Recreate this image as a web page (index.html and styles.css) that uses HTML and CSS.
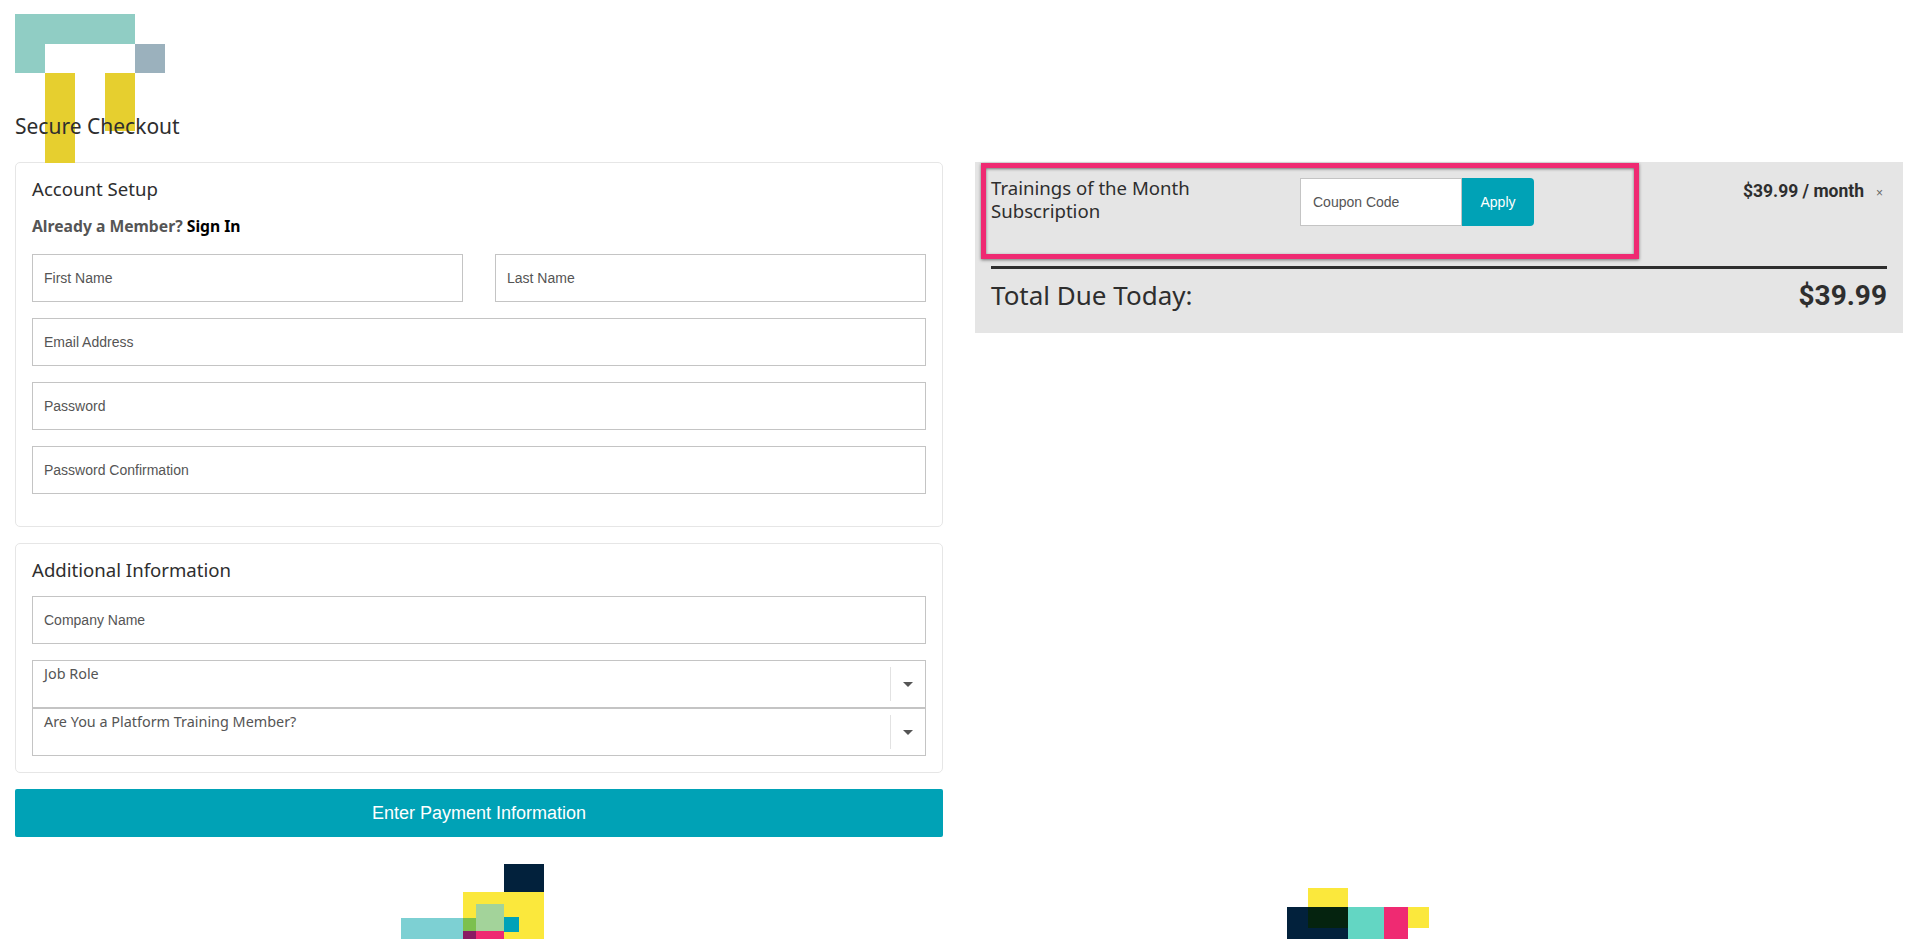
FILE: index.html
```html
<!DOCTYPE html>
<html lang="en">
<head>
    <meta charset="UTF-8">
    <meta name="viewport" content="width=device-width, initial-scale=1.0">
    <title>Secure Checkout</title>
    <link rel="stylesheet" href="styles.css">
</head>
<body>
    <header class="page-header">
        <svg class="logo" width="150" height="149" viewBox="0 0 150 149">
            <path fill="#90cdc4" d="M0 0H120V30H30V59H0Z"/>
            <rect x="120" y="30" width="30" height="29" fill="#9bb1bd"/>
            <rect x="30" y="59" width="30" height="90" fill="#e6cf2f"/>
            <rect x="90" y="59" width="30" height="58" fill="#e6cf2f"/>
        </svg>
        <h1>Secure Checkout</h1>
    </header>

    <main class="checkout">
        <div class="form-column">
            <section class="card account-card">
                <h2>Account Setup</h2>
                <p class="member-note">Already a Member? <a href="#">Sign In</a></p>
                <div class="field-row">
                    <div class="field">First Name</div>
                    <div class="field">Last Name</div>
                </div>
                <div class="field">Email Address</div>
                <div class="field">Password</div>
                <div class="field">Password Confirmation</div>
            </section>

            <section class="card info-card">
                <h2>Additional Information</h2>
                <div class="field">Company Name</div>
                <div class="select-stack">
                    <div class="select-field">
                        <span class="select-label">Job Role</span>
                        <span class="select-arrow"></span>
                    </div>
                    <div class="select-field">
                        <span class="select-label">Are You a Platform Training Member?</span>
                        <span class="select-arrow"></span>
                    </div>
                </div>
            </section>

            <button class="submit-button">Enter Payment Information</button>
        </div>

        <aside class="summary">
            <div class="summary-item">
                <div class="highlight-box">
                    <div class="item-name">Trainings of the Month<br>Subscription</div>
                    <div class="coupon">
                        <div class="coupon-input">Coupon Code</div>
                        <button class="coupon-button">Apply</button>
                    </div>
                </div>
                <div class="item-price">$39.99 / month</div>
                <span class="item-remove">×</span>
            </div>
            <div class="summary-total">
                <span class="total-label">Total Due Today:</span>
                <span class="total-price">$39.99</span>
            </div>
        </aside>
    </main>

    <footer class="page-footer">
        <svg class="badge badge-left" width="143" height="76" viewBox="0 0 143 76">
            <rect x="103" y="0" width="40" height="28" fill="#02213c"/>
            <rect x="62" y="28" width="81" height="48" fill="#fbe83c"/>
            <rect x="0" y="54" width="62" height="22" fill="#7dd0d3"/>
            <rect x="75" y="40" width="28" height="27" fill="#a3d39a"/>
            <rect x="62" y="54" width="13" height="13" fill="#7cc04f"/>
            <rect x="62" y="67" width="13" height="9" fill="#8a1c63"/>
            <rect x="75" y="67" width="28" height="9" fill="#ef2a72"/>
            <rect x="103" y="53" width="15" height="15" fill="#00a2b8"/>
        </svg>
        <svg class="badge badge-right" width="142" height="52" viewBox="0 0 142 52">
            <rect x="21" y="0" width="40" height="19" fill="#fbe83c"/>
            <rect x="0" y="19" width="61" height="33" fill="#02213c"/>
            <rect x="21" y="19" width="40" height="21" fill="#05230f"/>
            <rect x="61" y="19" width="36" height="33" fill="#63d6c3"/>
            <rect x="97" y="19" width="24" height="33" fill="#ef2a72"/>
            <rect x="121" y="19" width="21" height="21" fill="#fbe83c"/>
        </svg>
    </footer>
</body>
</html>
```

FILE: styles.css
```css
html,
body {
    height: 939px;
    overflow: hidden;
}

body {
    margin: 0;
    padding: 0 16px 0 15px;
    background: white;
    color: #2e2e2e;
    font-family: 'Noto Sans', sans-serif;
}

.page-header {
    position: relative;
    height: 162px;
    display: flex;
    align-items: flex-end;
}

.logo {
    position: absolute;
    top: 14px;
    left: 0;
}

.page-header h1 {
    position: relative;
    margin: 0 0 23px 0;
    font-size: 21px;
    font-weight: 400;
    line-height: 26px;
}

.checkout {
    display: grid;
    grid-template-columns: 928px 928px;
    gap: 32px;
    align-items: start;
}

.form-column {
    display: flex;
    flex-direction: column;
    gap: 16px;
}

.card {
    display: flex;
    flex-direction: column;
    gap: 16px;
    padding: 12px 16px 16px;
    border: 1px solid #e6e6e6;
    border-radius: 5px;
    background: white;
}

.account-card {
    height: 365px;
    box-sizing: border-box;
}

.info-card {
    height: 230px;
    box-sizing: border-box;
}

.card h2 {
    margin: 0;
    font-size: 18.6px;
    font-weight: 400;
    line-height: 28px;
}

.account-card h2 {
    margin-bottom: -3px;
}

.info-card h2 {
    margin-bottom: -4px;
}

.member-note {
    margin: 0 0 2px 0;
    font-size: 15.7px;
    font-weight: 700;
    line-height: 20px;
    color: #555;
}

.member-note a {
    color: black;
    text-decoration: none;
}

.field-row {
    display: grid;
    grid-template-columns: 1fr 1fr;
    gap: 32px;
}

.field {
    height: 48px;
    flex-shrink: 0;
    box-sizing: border-box;
    display: flex;
    align-items: center;
    padding: 0 11px;
    border: 1.5px solid #c4c4c4;
    font-family: 'Liberation Sans', sans-serif;
    font-size: 14px;
    color: #555;
}

.select-field {
    height: 48px;
    box-sizing: border-box;
    display: flex;
    justify-content: space-between;
    padding: 3px 0 0 11px;
    border: 1.5px solid #c4c4c4;
    font-size: 14.4px;
    color: #555;
}

.select-label {
    line-height: 20px;
}

.select-arrow {
    position: relative;
    width: 34px;
    height: 34px;
    margin: 3px 0 0 0;
    border-left: 1px solid #e2e2e2;
}

.select-arrow::after {
    content: "";
    position: absolute;
    top: 15px;
    left: 12px;
    border-top: 5px solid #555;
    border-left: 5px solid transparent;
    border-right: 5px solid transparent;
}

.submit-button {
    height: 48px;
    padding-top: 2px;
    border: none;
    border-radius: 2px;
    background: #00a2b6;
    color: white;
    font-family: 'Liberation Sans', sans-serif;
    font-size: 18px;
}

.summary {
    height: 171px;
    box-sizing: border-box;
    padding: 1px 16px 0 6px;
    background: #e5e5e5;
}

.summary-item {
    display: flex;
    align-items: flex-start;
}

.highlight-box {
    width: 658px;
    height: 96px;
    flex-shrink: 0;
    box-sizing: border-box;
    display: flex;
    padding: 10px 5px;
    border: 5px solid #ef2a72;
    box-shadow: 0 1px 3px rgba(0,0,0,0.5), inset 0 1px 3px rgba(0,0,0,0.5);
}

.item-name {
    width: 309px;
    margin-top: -2px;
    font-size: 18.6px;
    line-height: 23px;
}

.coupon {
    display: flex;
    height: 48px;
}

.coupon-input {
    width: 162px;
    box-sizing: border-box;
    display: flex;
    align-items: center;
    padding: 0 12px;
    background: white;
    border: 1px solid #c4c4c4;
    font-family: 'Liberation Sans', sans-serif;
    font-size: 14px;
    color: #555;
}

.coupon-button {
    width: 72px;
    border: none;
    border-radius: 0 4px 4px 0;
    background: #00a2b6;
    color: white;
    font-family: 'Liberation Sans', sans-serif;
    font-size: 14px;
}

.item-price {
    margin: 17px 0 0 auto;
    font-family: Roboto, sans-serif;
    font-size: 17.5px;
    font-weight: 700;
    line-height: 22px;
}

.item-remove {
    width: 23px;
    box-sizing: border-box;
    margin-top: 22px;
    padding-right: 4px;
    text-align: right;
    font-family: 'Liberation Sans', sans-serif;
    font-size: 12px;
    line-height: 16px;
    color: #666;
}

.summary-total {
    display: flex;
    justify-content: space-between;
    align-items: center;
    height: 52px;
    margin: 7px 0 0 10px;
    border-top: 3px solid #2e2e2e;
}

.total-label {
    font-size: 26px;
}

.total-price {
    font-family: Roboto, sans-serif;
    font-size: 28px;
    font-weight: 700;
}

.page-footer {
    display: flex;
    align-items: flex-start;
    height: 76px;
    margin-top: 27px;
}

.badge {
    flex-shrink: 0;
}

.badge-left {
    margin-left: 386px;
}

.badge-right {
    margin: 24px 0 0 743px;
}
```
